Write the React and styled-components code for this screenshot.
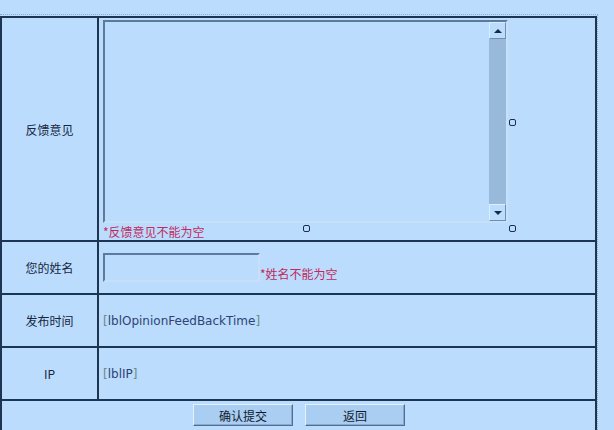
import styled, { createGlobalStyle } from "styled-components";

const GlobalStyle = createGlobalStyle`
  html, body {
    margin: 0;
    padding: 0;
    background: #bbdcfd;
  }
  body {
    font-family: "Liberation Sans", "Noto Sans CJK SC", sans-serif;
    font-size: 12px;
    color: #1c2c4c;
  }
`;

const Frame = styled.div`
  margin-top: 14px;
  width: 598px;
  border-top: 1px dotted #8fa8c4;
  border-right: 1px dotted #8fa8c4;
  padding-top: 1px;
  height: 430px;
  box-sizing: border-box;
`;

const FormTable = styled.table`
  width: 597px;
  border-collapse: separate;
  border-spacing: 0;
  border: 1px solid #1b3553;
`;

const Label = styled.td`
  width: 95px;
  height: ${(p) => p.$h}px;
  padding: 0;
  border: 1px solid #1b3553;
  text-align: center;
  font-family: "Noto Sans CJK SC", sans-serif;
  font-size: 12px;
  color: #16263f;
`;

const Field = styled.td`
  padding: ${(p) => (p.$top ? "1px 0 0 4px" : "0 0 0 4px")};
  border: 1px solid #1b3553;
  vertical-align: ${(p) => (p.$top ? "top" : "middle")};
  color: #2f4274;
  font-family: "DejaVu Sans", "Noto Sans CJK SC", sans-serif;
  font-size: 12px;
`;

const ActionCell = styled.td`
  height: 30px;
  padding: 3px 0 0;
  border: 1px solid #1b3553;
  vertical-align: top;
`;

const Actions = styled.div`
  display: flex;
  justify-content: center;
  gap: 12px;
  padding-left: 1px;
`;

const Button = styled.button`
  width: 100px;
  height: 22px;
  padding: 0;
  background: #aacdf2;
  border: 1px solid;
  border-color: #e2f0ff #4f6f98 #4f6f98 #e2f0ff;
  box-shadow: inset -1px -1px 0 #8aa8cc;
  font-family: "Noto Sans CJK SC", sans-serif;
  font-size: 12px;
  color: #101c30;
`;

const TextBoxWrap = styled.div`
  position: relative;
  width: 405px;
`;

const TextBox = styled.div`
  display: flex;
  width: 405px;
  height: 203px;
  box-sizing: border-box;
  border: 2px solid;
  border-color: #5b7b9d #c6e0fa #c6e0fa #5b7b9d;
  margin-top: 1px;
`;

const TextArea = styled.textarea`
  flex: 1;
  border: none;
  background: transparent;
  resize: none;
  outline: none;
  overflow: hidden;
`;

const ScrollBar = styled.div`
  width: 17px;
  display: flex;
  flex-direction: column;
  background: #99b9da;
`;

const ScrollButton = styled.div`
  height: 17px;
  box-sizing: border-box;
  background: #bbdcfd;
  border: 1px solid;
  border-color: #dcedff #6f8fb4 #6f8fb4 #dcedff;
  display: flex;
  align-items: center;
  justify-content: center;
`;

const Track = styled.div`
  flex: 1;
`;

const Arrow = styled.div`
  width: 0;
  height: 0;
  border-left: 4px solid transparent;
  border-right: 4px solid transparent;
  ${(p) =>
    p.$down
      ? "border-top: 4px solid #142a48;"
      : "border-bottom: 4px solid #142a48;"}
`;

const Handle = styled.span`
  position: absolute;
  width: 5px;
  height: 5px;
  border: 1px solid #1b2f4a;
  border-radius: 2px;
  left: ${(p) => p.$x}px;
  top: ${(p) => p.$y}px;
`;

const ErrorText = styled.span`
  color: #c02a5c;
  font-family: "Noto Sans CJK SC", sans-serif;
  font-size: 12px;
`;

const ErrorLine = styled.div`
  height: 16px;
  line-height: 18px;
`;

const NameRow = styled.div`
  display: flex;
  align-items: flex-end;
`;

const NameInput = styled.input`
  width: 157px;
  height: 29px;
  box-sizing: border-box;
  margin: 0;
  background: transparent;
  border: 2px solid;
  border-color: #5b7b9d #c6e0fa #c6e0fa #5b7b9d;
  outline: none;
`;

const Bracket = styled.span`
  color: #6d8a80;
`;

export default function App() {
  return (
    <>
      <GlobalStyle />
      <Frame>
        <FormTable>
          <tbody>
            <tr>
              <Label $h={222}>反馈意见</Label>
              <Field $top>
                <TextBoxWrap>
                  <TextBox>
                    <TextArea />
                    <ScrollBar>
                      <ScrollButton>
                        <Arrow />
                      </ScrollButton>
                      <Track />
                      <ScrollButton>
                        <Arrow $down />
                      </ScrollButton>
                    </ScrollBar>
                  </TextBox>
                  <Handle $x={200} $y={205} />
                  <Handle $x={406} $y={99} />
                  <Handle $x={406} $y={205} />
                </TextBoxWrap>
                <ErrorLine>
                  <ErrorText>*反馈意见不能为空</ErrorText>
                </ErrorLine>
              </Field>
            </tr>
            <tr>
              <Label $h={51}>您的姓名</Label>
              <Field>
                <NameRow>
                  <NameInput type="text" />
                  <ErrorText>*姓名不能为空</ErrorText>
                </NameRow>
              </Field>
            </tr>
            <tr>
              <Label $h={51}>发布时间</Label>
              <Field>
                <Bracket>[</Bracket>lblOpinionFeedBackTime<Bracket>]</Bracket>
              </Field>
            </tr>
            <tr>
              <Label $h={51}>IP</Label>
              <Field>
                <Bracket>[</Bracket>lblIP<Bracket>]</Bracket>
              </Field>
            </tr>
            <tr>
              <ActionCell colSpan={2}>
                <Actions>
                  <Button type="button">确认提交</Button>
                  <Button type="button">返回</Button>
                </Actions>
              </ActionCell>
            </tr>
          </tbody>
        </FormTable>
      </Frame>
    </>
  );
}
